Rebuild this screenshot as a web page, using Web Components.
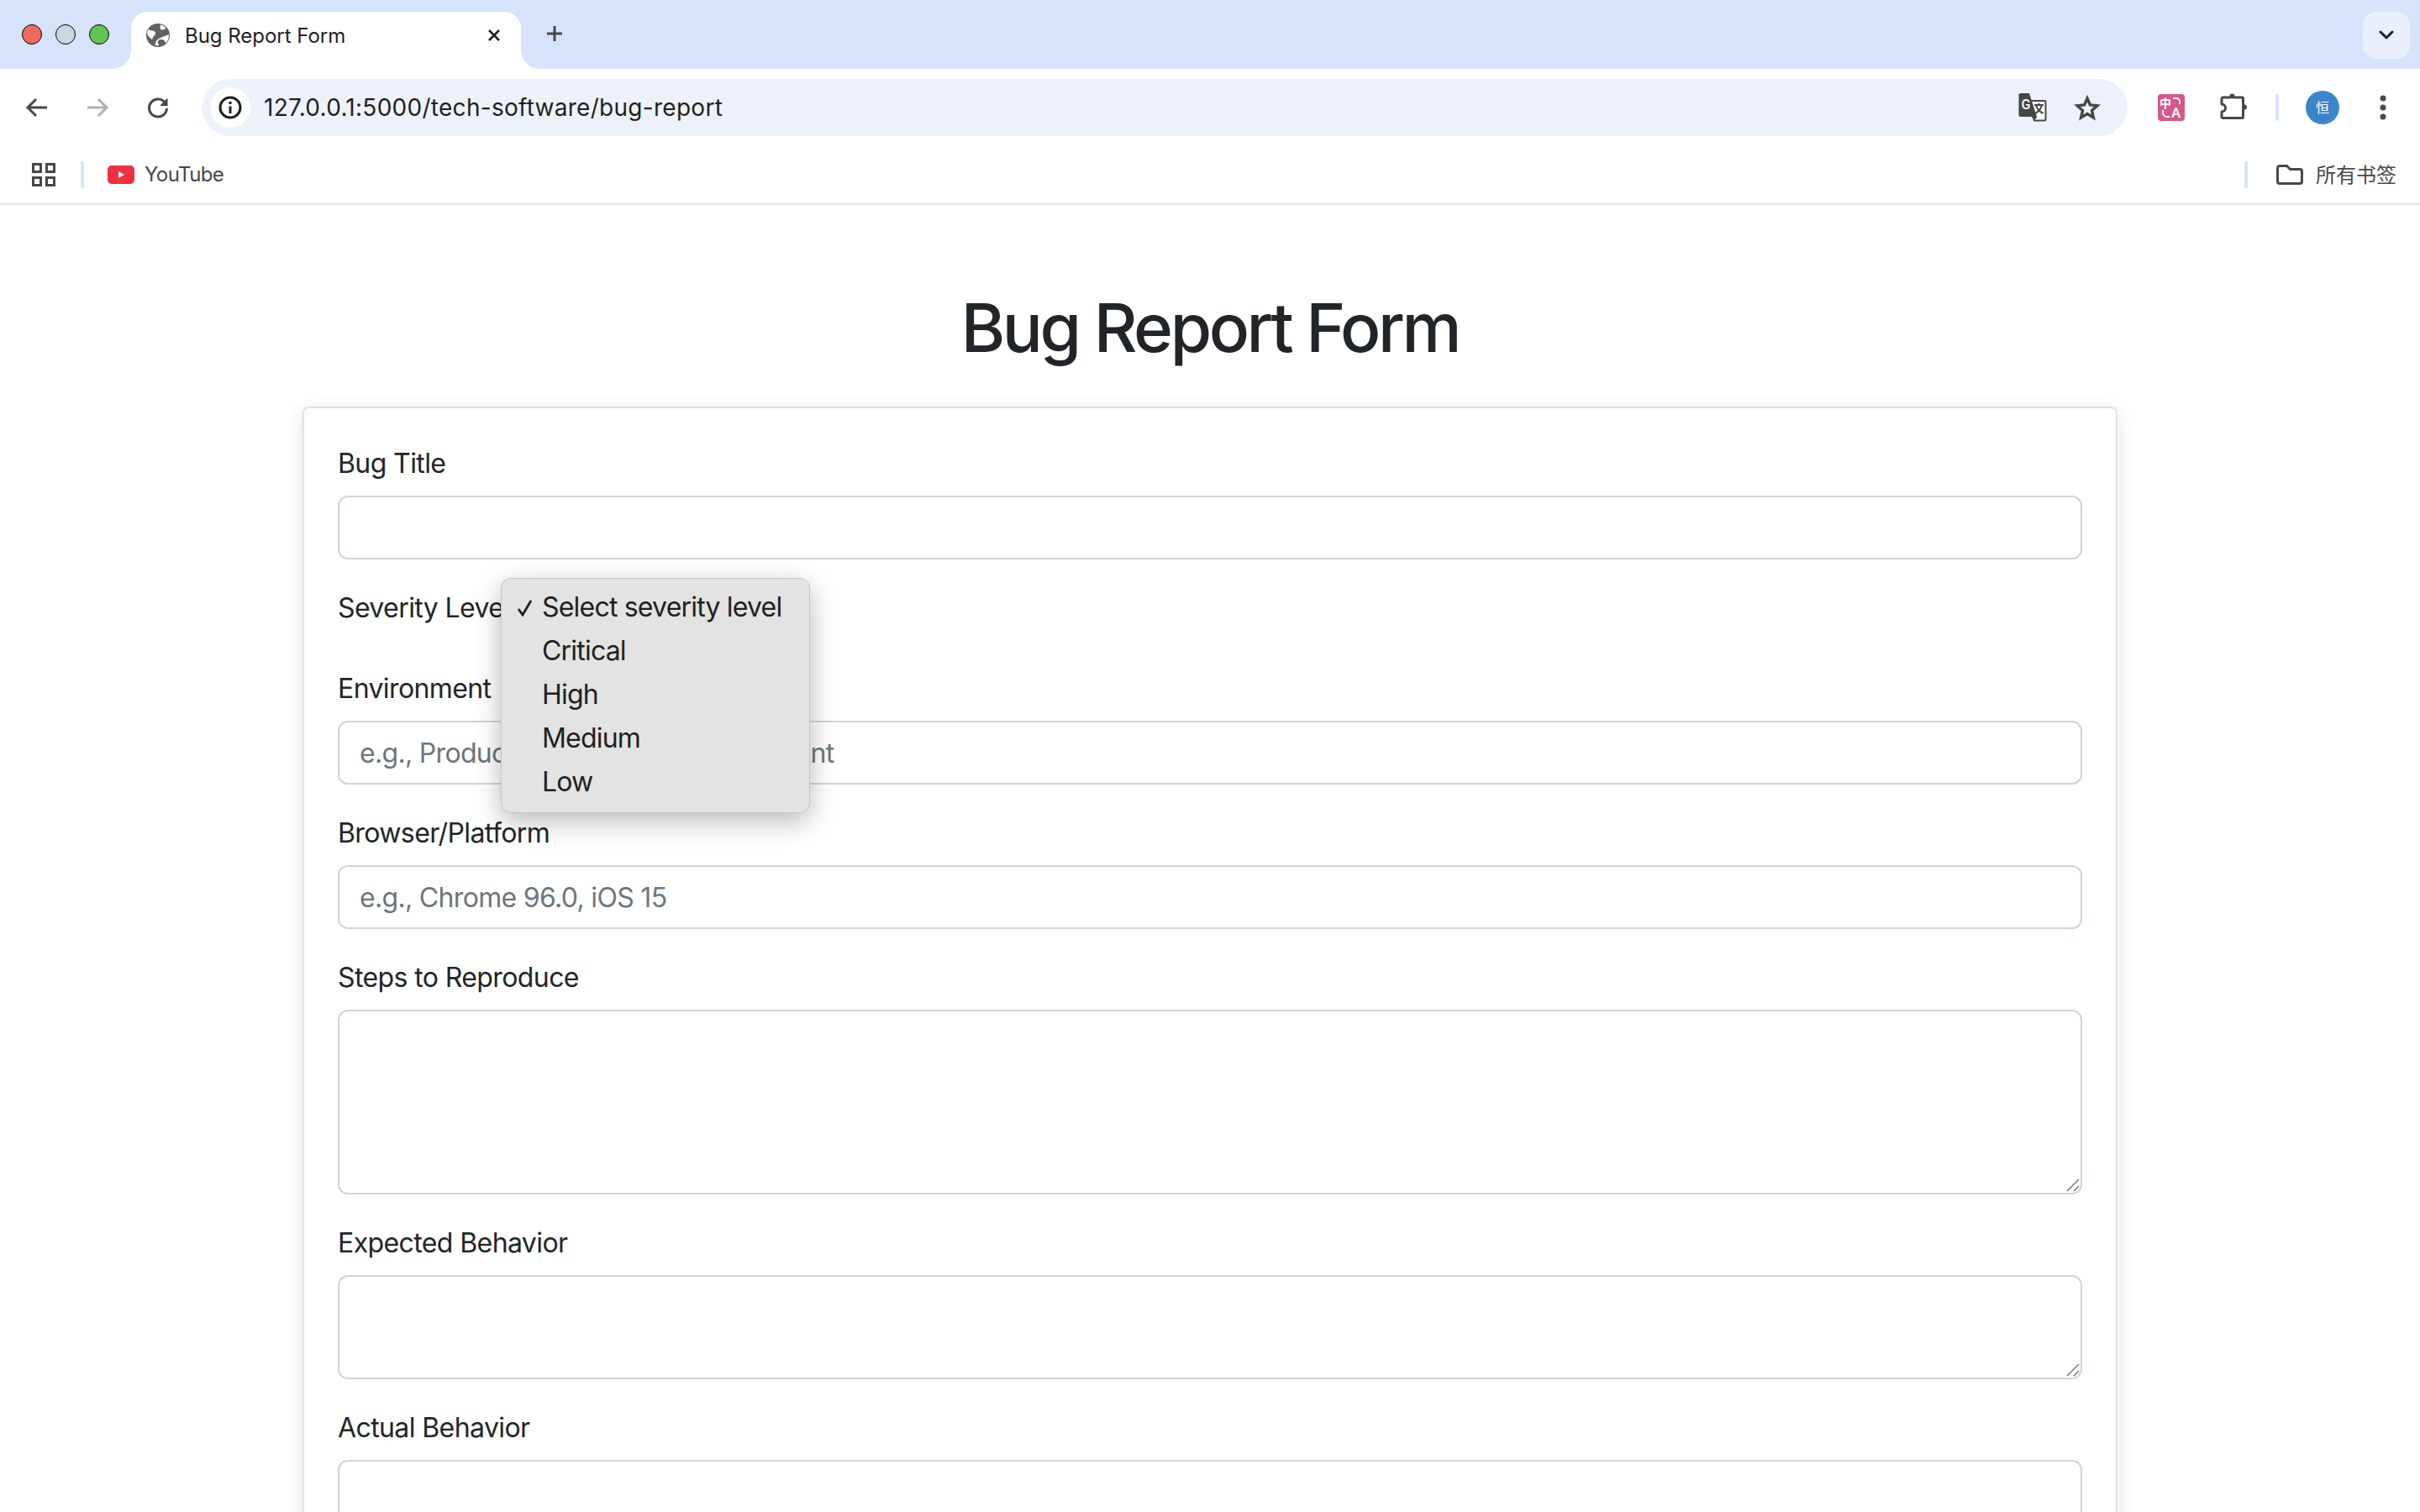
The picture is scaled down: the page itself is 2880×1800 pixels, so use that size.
<!DOCTYPE html>
<html lang="en">
<head>
<meta charset="utf-8">
<title>Bug Report Form</title>
<style>
  html, body { margin: 0; height: 1800px; overflow: hidden; background: #fff; }
  body { font-family: Inter, "Noto Sans CJK SC", sans-serif; }
</style>
</head>
<body>
<browser-tabstrip title-text="Bug Report Form"></browser-tabstrip>
<browser-toolbar url="127.0.0.1:5000/tech-software/bug-report"></browser-toolbar>
<bookmarks-bar></bookmarks-bar>
<report-page heading="Bug Report Form">
  <form-field label="Bug Title"></form-field>
  <form-field label="Severity Level" kind="select">
    <select-popup>
      <popup-option checked>Select severity level</popup-option>
      <popup-option>Critical</popup-option>
      <popup-option>High</popup-option>
      <popup-option>Medium</popup-option>
      <popup-option>Low</popup-option>
    </select-popup>
  </form-field>
  <form-field label="Environment" placeholder="e.g., Production, Staging, Development"></form-field>
  <form-field label="Browser/Platform" placeholder="e.g., Chrome 96.0, iOS 15"></form-field>
  <form-field label="Steps to Reproduce" kind="textarea" height="220"></form-field>
  <form-field label="Expected Behavior" kind="textarea" height="124"></form-field>
  <form-field label="Actual Behavior" kind="textarea" height="124"></form-field>
</report-page>

<script>
class BrowserTabstrip extends HTMLElement {
  constructor() {
    super();
    this.shadowDOM = this.attachShadow({ mode: "open" });
  }
  connectedCallback() {
    this.shadowDOM.innerHTML = `
      <style>
        :host { display: flex; align-items: flex-end; height: 82px; background: #d6e3fb; font-family: Inter, sans-serif; }
        .lights { display: flex; gap: 16px; align-self: flex-start; margin: 29px 26px 0; }
        .lights i { width: 22px; height: 22px; border-radius: 50%; border: 1px solid; }
        .red { background: #ee6a5f; border-color: #d5544a; }
        .grey { background: #ced5e3; border-color: #b9bfcc; }
        .green { background: #61c554; border-color: #4fae44; }
        .tab { position: relative; display: flex; align-items: center; width: 464px; height: 68px; box-sizing: border-box; padding: 0 24px 12px 18px; background: #fff; border-radius: 20px 20px 0 0; }
        .tab::before, .tab::after { content: ""; position: absolute; bottom: 0; width: 22px; height: 22px; }
        .tab::before { left: -22px; background: radial-gradient(circle at 0 0, #d6e3fb 21.5px, #fff 22px); }
        .tab::after { right: -22px; background: radial-gradient(circle at 100% 0, #d6e3fb 21.5px, #fff 22px); }
        .title { margin-left: 18px; font-size: 24px; letter-spacing: -0.03px; color: #1f1f1f; white-space: nowrap; }
        .close { margin-left: auto; display: block; }
        .plus { display: block; align-self: flex-start; margin: 30px 0 0 30px; }
        .more { display: flex; align-items: center; justify-content: center; align-self: flex-start; width: 56px; height: 56px; margin: 14px 12px 0 auto; background: #e9f0fc; border-radius: 16px; }
      </style>
      <div class="lights"><i class="red"></i><i class="grey"></i><i class="green"></i></div>
      <div class="tab">
        <svg width="28" height="28" viewBox="0 0 28 28">
          <circle cx="14" cy="14" r="14" fill="#5f6368"/>
          <path d="M2.500 7C5 9 8 8 10 9.500c2 1.500 1 4-1 5.500-1.500 1 -1 3 -2 4C4 17 1.500 14 1.200 11.500 1.400 10 2 8 2.500 7Z" fill="#fff"/>
          <path d="M17 1.500c2.500 .5 5 2 6.500 4 -1.500 .5 -2 2 -3.500 2 -2 0 -3.500 -.5 -3.500 -2.500 0 -1.500 .5 -2.500 .5 -3.500Z" fill="#fff"/>
          <path d="M26.800 13c.4 3.500 -.8 7.500 -3.300 10.500 -1 -1.500 -1.500 -3.500 -3 -4 -2.500 -.8 -5.500 -.5 -6.500 1.500 -.7 1.500 .5 3 1 5 -1.500 .5 -3 .3 -4.500 -.2 .3 -2.500 1 -5 3.500 -7 3 -2.500 8 -3.500 12.800 -5.800Z" fill="#fff"/>
        </svg>
        <span class="title">${this.getAttribute("title-text")}</span>
        <svg class="close" width="16" height="16" viewBox="0 0 16 16"><path d="M2 2l12 12M14 2L2 14" stroke="#1f1f1f" stroke-width="2.600" fill="none"/></svg>
      </div>
      <svg class="plus" width="20" height="20" viewBox="0 0 20 20"><path d="M10 1v18M1 10h18" stroke="#474747" stroke-width="3" fill="none"/></svg>
      <div class="more"><svg width="18" height="12" viewBox="0 0 18 12"><path d="M2 2l7 7 7-7" stroke="#1f1f1f" stroke-width="3" stroke-linecap="round" stroke-linejoin="round" fill="none"/></svg></div>
    `;
  }
}

class BrowserToolbar extends HTMLElement {
  constructor() {
    super();
    this.shadowDOM = this.attachShadow({ mode: "open" });
  }
  connectedCallback() {
    this.shadowDOM.innerHTML = `
      <style>
        :host { display: flex; align-items: center; height: 92px; padding-left: 8px; background: #fff; border-radius: 16px 16px 0 0; font-family: Inter, sans-serif; }
        .nav { display: flex; width: 72px; justify-content: center; }
        .omnibox { display: flex; align-items: center; flex: 1; height: 68px; margin-left: 16px; padding: 0 32px 0 10px; background: #edf2fa; border-radius: 34px; }
        .info { display: flex; align-items: center; justify-content: center; width: 48px; height: 48px; background: #fff; border-radius: 50%; }
        .url { margin-left: 16px; font-size: 28px; letter-spacing: 0.28px; color: #1f1f1f; white-space: nowrap; }
        .star { margin-left: 32px; }
        .translate { margin-left: auto; }
        .right { display: flex; align-items: center; width: 348px; box-sizing: border-box; }
        .right svg { display: block; }
        .pink { margin-left: 36px; overflow: visible; }
        .puzzle { margin-left: 42px; margin-top: -4px; }
        .sep { width: 4px; height: 32px; margin-left: 34px; background: #d6e3fb; border-radius: 2px; }
        .avatar { margin-left: 32px; }
        .dots { margin-left: 48px; }
      </style>
      <div class="nav"><svg width="28" height="24" viewBox="0 0 28 24"><path d="M26 12H4M13 2L3 12l10 10" stroke="#474747" stroke-width="3" fill="none"/></svg></div>
      <div class="nav"><svg width="28" height="24" viewBox="0 0 28 24"><path d="M2 12h22M15 2l10 10-10 10" stroke="#b0b0b0" stroke-width="3" fill="none"/></svg></div>
      <div class="nav"><svg width="26" height="26" viewBox="0 0 26 26"><path d="M22.500 9A10.500 10.500 0 1 0 23.500 14" stroke="#474747" stroke-width="3" fill="none"/><path d="M24.500 1.500V11H15Z" fill="#474747"/></svg></div>
      <div class="omnibox">
        <div class="info"><svg width="28" height="28" viewBox="0 0 28 28"><circle cx="14" cy="14" r="12" stroke="#1f1f1f" stroke-width="3" fill="none"/><path d="M14 12.500V21" stroke="#1f1f1f" stroke-width="3"/><circle cx="14" cy="8.500" r="1.800" fill="#1f1f1f"/></svg></div>
        <span class="url">${this.getAttribute("url")}</span>
        <svg class="translate" width="34" height="34" viewBox="0 0 34 34">
          <path d="M15 9H31a1.500 1.500 0 0 1 1.500 1.500V31a1.500 1.500 0 0 1-1.500 1.500H18" stroke="#474747" stroke-width="2" fill="#fff"/>
          <path d="M2.500 0H13L22 28H2.500A2 2 0 0 1 .5 26V2A2 2 0 0 1 2.500 0Z" fill="#474747"/>
          <path d="M16 28l2.500 5 4-5Z" fill="#474747"/>
          <text x="3.500" y="19" font-family="Roboto, sans-serif" font-size="16" font-weight="500" fill="#fff">G</text>
          <path d="M19 14h11M24.500 12v2M21 14c1 4 4.500 8 8.500 10M28 14c-1 4-4 8-8 10" stroke="#474747" stroke-width="2" fill="none"/>
        </svg>
        <svg class="star" width="32" height="32" viewBox="0 0 32 32"><path d="M16 5l3.400 8 8.600 .8-6.500 5.700 1.900 8.500L16 23.500 8.600 28l1.900-8.500L4 13.800l8.600-.8Z" stroke="#474747" stroke-width="3.400" stroke-linejoin="miter" fill="none"/></svg>
      </div>
      <div class="right">
        <svg class="pink" width="32" height="32" viewBox="0 0 32 32">
          <rect width="32" height="32" rx="4" fill="#d9568a"/>
          <text x="2" y="16" font-family="'Noto Sans CJK SC', sans-serif" font-size="14" font-weight="700" fill="#fff">中</text>
          <text x="16" y="28" font-family="Roboto, sans-serif" font-size="17" font-weight="500" fill="#fff">A</text>
          <path d="M18 5h4a4 4 0 0 1 4 4v3M6 19v3a5 5 0 0 0 5 5h3" stroke="#fff" stroke-width="2" fill="none"/>
        </svg>
        <svg class="puzzle" width="32" height="32" viewBox="0 0 32 32">
          <path d="M3 6h9a3 3 0 0 1 5 0h9a1.500 1.500 0 0 1 1.500 1.500V15a3 3 0 0 1 0 5v9a1.500 1.500 0 0 1-1.500 1.500H3.500A1.500 1.500 0 0 1 2 29v-6a4.500 4.500 0 0 0 0-9V7.500A1.500 1.500 0 0 1 3 6Z" stroke="#474747" stroke-width="3" fill="none" stroke-linejoin="round"/>
          <circle cx="14.500" cy="4.500" r="3" fill="#474747"/>
          <circle cx="29" cy="17.500" r="3" fill="#474747"/>
        </svg>
        <div class="sep"></div>
        <svg class="avatar" width="40" height="40" viewBox="0 0 40 40">
          <circle cx="20" cy="20" r="20" fill="#3d85c9"/>
          <text x="20" y="26" text-anchor="middle" font-family="'Noto Sans CJK SC', sans-serif" font-size="16" fill="#fff">恒</text>
        </svg>
        <svg class="dots" width="8" height="30" viewBox="0 0 8 30"><circle cx="4" cy="4" r="3.500" fill="#474747"/><circle cx="4" cy="15" r="3.500" fill="#474747"/><circle cx="4" cy="26" r="3.500" fill="#474747"/></svg>
      </div>
    `;
  }
}

class BookmarksBar extends HTMLElement {
  constructor() {
    super();
    this.shadowDOM = this.attachShadow({ mode: "open" });
  }
  connectedCallback() {
    this.shadowDOM.innerHTML = `
      <style>
        :host { display: flex; align-items: center; height: 68px; padding: 0 28px 0 38px; background: #fff; border-bottom: 2px solid #e1e1e1; font-size: 24px; color: #474747; font-family: Inter, "Noto Sans CJK SC", sans-serif; }
        svg { display: block; }
        .sep { width: 4px; height: 32px; background: #d6e3fb; border-radius: 2px; }
        .first { margin-left: 30px; }
        .yt { margin-left: 28px; }
        .label { margin-left: 12px; margin-top: -2px; letter-spacing: -0.6px; }
        .last { margin-left: auto; }
        .folder { margin-left: 34px; }
        .all { margin-left: 15px; margin-top: -4px; }
      </style>
      <svg width="28" height="28" viewBox="0 0 28 28"><g fill="none" stroke="#474747" stroke-width="3"><rect x="1.500" y="1.500" width="9" height="9"/><rect x="17.500" y="1.500" width="9" height="9"/><rect x="1.500" y="17.500" width="9" height="9"/><rect x="17.500" y="17.500" width="9" height="9"/></g></svg>
      <div class="sep first"></div>
      <svg class="yt" width="32" height="22" viewBox="0 0 32 22"><rect width="32" height="22" rx="5" fill="#ee3040"/><path d="M13 7l7 4-7 4Z" fill="#fff"/></svg>
      <span class="label">YouTube</span>
      <div class="sep last"></div>
      <svg class="folder" width="32" height="24" viewBox="0 0 32 24"><path d="M4 1.500h8.500l4 4H28a2.500 2.500 0 0 1 2.500 2.500v12a2.500 2.500 0 0 1-2.500 2.500H4A2.500 2.500 0 0 1 1.500 20V4A2.500 2.500 0 0 1 4 1.500Z" stroke="#474747" stroke-width="3" fill="none"/></svg>
      <span class="all">所有书签</span>
    `;
  }
}

class ReportPage extends HTMLElement {
  constructor() {
    super();
    this.shadowDOM = this.attachShadow({ mode: "open" });
  }
  connectedCallback() {
    this.shadowDOM.innerHTML = `
      <style>
        :host { display: block; padding: 98px 360px 0; font-family: Inter, sans-serif; color: #212529; }
        h1 { margin: 0 0 46px; font-size: 80px; line-height: 96px; font-weight: 500; letter-spacing: -3.400px; text-align: center; }
        .card { padding: 40px; background: #fff; border: 2px solid #e0e1e2; border-radius: 8px; box-shadow: 0 4px 20px rgba(0, 0, 0, 0.12); }
      </style>
      <h1>${this.getAttribute("heading")}</h1>
      <div class="card"><slot></slot></div>
    `;
  }
}

class FormField extends HTMLElement {
  constructor() {
    super();
    this.shadowDOM = this.attachShadow({ mode: "open" });
  }
  connectedCallback() {
    const kind = this.getAttribute("kind") || "input";
    const label = this.getAttribute("label");
    const placeholder = this.getAttribute("placeholder") || "";
    const height = this.getAttribute("height");
    let control = `<input type="text" placeholder="${placeholder}">`;
    if (kind === "textarea") {
      control = `<div class="area"><textarea style="height:${height}px"></textarea>
        <svg class="grip" width="16" height="16" viewBox="0 0 16 16"><path d="M1 15L15 1M9 15l6-6" stroke="#777" stroke-width="1.500" fill="none"/></svg></div>`;
    }
    if (kind === "select") control = "";
    this.shadowDOM.innerHTML = `
      <style>
        :host { display: flow-root; position: relative; margin-bottom: 32px; font-size: 32px; line-height: 48px; letter-spacing: -0.6px; }
        label { display: block; padding-top: 2px; margin-bottom: 16px; height: 48px; box-sizing: border-box; }
        input, textarea { display: block; width: 100%; box-sizing: border-box; margin: 0; padding: 12px 24px; font: inherit; letter-spacing: inherit; color: #212529; background: #fff; border: 2px solid #ced4da; border-radius: 12px; outline: none; }
        input { height: 76px; letter-spacing: -0.68px; }
        textarea { resize: none; }
        ::placeholder { color: #6c757d; opacity: 1; }
        .area { position: relative; }
        .grip { position: absolute; right: 3px; bottom: 3px; }
      </style>
      <label>${label}</label>
      ${control}
      <slot></slot>
    `;
  }
}

class SelectPopup extends HTMLElement {
  constructor() {
    super();
    this.shadowDOM = this.attachShadow({ mode: "open" });
  }
  connectedCallback() {
    this.shadowDOM.innerHTML = `
      <style>
        :host { display: block; position: absolute; z-index: 5; left: 194px; top: -10px; width: 368px; height: 280px; box-sizing: border-box; padding: 8px 0 0; background: #e3e3e3; border: 1px solid #c6c6c6; border-radius: 12px; box-shadow: 0 10px 32px rgba(0, 0, 0, 0.28); }
      </style>
      <slot></slot>
    `;
  }
}

class PopupOption extends HTMLElement {
  constructor() {
    super();
    this.shadowDOM = this.attachShadow({ mode: "open" });
  }
  connectedCallback() {
    const mark = this.hasAttribute("checked")
      ? `<svg width="20" height="24" viewBox="0 0 20 24"><path d="M2 14l5 7L17 4" stroke="#1f1f1f" stroke-width="2.800" fill="none"/></svg>`
      : "";
    this.shadowDOM.innerHTML = `
      <style>
        :host { display: flex; align-items: center; height: 52px; font-size: 32px; line-height: 52px; letter-spacing: -0.8px; color: #1f1f1f; }
        .mark { display: flex; width: 48px; justify-content: flex-end; padding-right: 10px; box-sizing: border-box; }
      </style>
      <div class="mark">${mark}</div>
      <slot></slot>
    `;
  }
}

customElements.define("browser-tabstrip", BrowserTabstrip);
customElements.define("browser-toolbar", BrowserToolbar);
customElements.define("bookmarks-bar", BookmarksBar);
customElements.define("report-page", ReportPage);
customElements.define("form-field", FormField);
customElements.define("select-popup", SelectPopup);
customElements.define("popup-option", PopupOption);
</script>
</body>
</html>
